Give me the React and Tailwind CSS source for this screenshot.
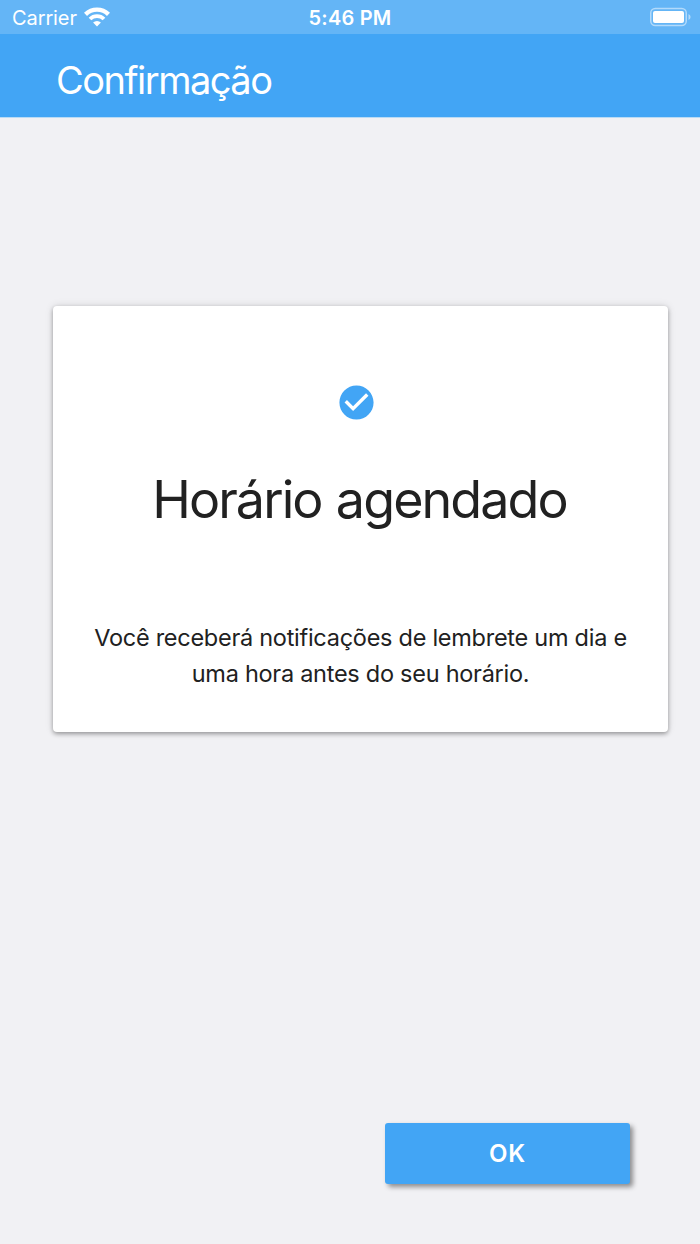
function StatusBar() {
  return (
    <div className="flex h-[34px] items-center bg-[#64b5f6] pl-3 pr-2 text-[20px] text-white">
      <div className="flex flex-1 items-center gap-[7px]">
        <span className="mt-0.5 tracking-[-0.1px]">Carrier</span>
        <svg width="26" height="20" viewBox="0 0 26 20" fill="none" stroke="currentColor">
          <path d="M1.5 7.3a16.5 16.5 0 0 1 23 0" strokeWidth="4.4" />
          <path d="M6 12a10 10 0 0 1 14 0" strokeWidth="3.8" />
          <path d="M13 19.4l-3.9-3.8a5.5 5.5 0 0 1 7.8 0z" fill="currentColor" stroke="none" />
        </svg>
      </div>
      <span className="-ml-1 mt-0.5 font-semibold tracking-[0.2px]">5:46 PM</span>
      <div className="flex flex-1 justify-end">
        <svg width="42" height="20" viewBox="0 0 42 20" fill="none">
          <rect x="0.75" y="1.5" width="35.5" height="17" rx="4.5" stroke="white" strokeOpacity="0.5" strokeWidth="1.5" />
          <rect x="3" y="4" width="31" height="12" rx="2" fill="white" />
          <path d="M38.5 7v6a3.2 3.2 0 0 0 0-6z" fill="white" fillOpacity="0.5" />
        </svg>
      </div>
    </div>
  );
}

export default function App() {
  return (
    <div className="flex h-[1244px] w-[700px] flex-col bg-[#f1f1f4] font-['Inter',sans-serif]">
      <StatusBar />
      <header className="flex h-[84px] items-center border-b border-[#b9dbf5] bg-[#42a5f5] pl-14 pt-2.5">
        <h1 className="text-[38px] tracking-[-1.5px] text-white">Confirmação</h1>
      </header>

      <main className="ml-[53px] mt-[188px] flex h-[426px] w-[615px] flex-col items-center rounded bg-white pt-[76px] text-[#212121] shadow-[0_2px_4px_rgba(0,0,0,0.32),0_0_8px_rgba(0,0,0,0.12)]">
        <svg className="-ml-2" width="41" height="41" viewBox="0 0 24 24" fill="#42a5f5">
          <path d="M12 2C6.48 2 2 6.48 2 12s4.48 10 10 10 10-4.48 10-10S17.52 2 12 2zm-2 15l-5-5 1.41-1.41L10 14.17l7.59-7.59L19 8l-9 9z" />
        </svg>
        <h2 className="-ml-0.5 mt-[43px] text-[52px] leading-[68px] tracking-[-1.9px] [word-spacing:1.5px]">
          Horário agendado
        </h2>
        <p className="mt-[86px] text-center text-[23.5px] leading-9 tracking-[-0.27px]">
          Você receberá notificações de lembrete um dia e<br />
          uma hora antes do seu horário.
        </p>
      </main>

      <button className="mb-[60px] ml-[385px] mt-auto h-[61px] w-[245px] rounded-[3px] bg-[#42a5f5] text-[24px] font-semibold tracking-[0.8px] text-white shadow-[3px_3px_5px_rgba(0,0,0,0.42)]">
        OK
      </button>
    </div>
  );
}
